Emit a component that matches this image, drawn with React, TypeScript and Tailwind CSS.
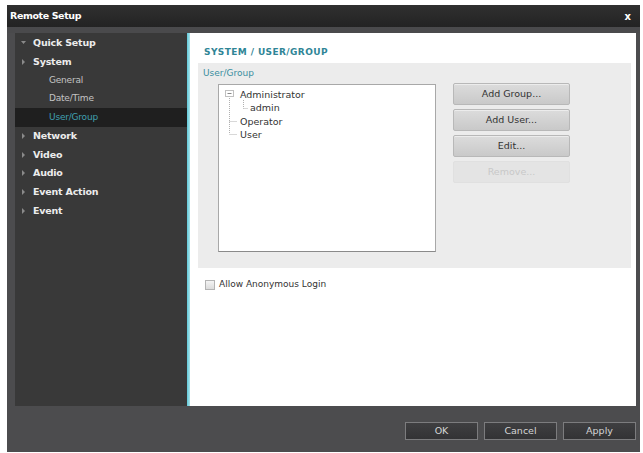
import { ReactNode } from 'react';

const font = { fontFamily: '"DejaVu Sans", Verdana, sans-serif' };

type NavItem = {
  label: string;
  level: 0 | 1;
  open?: boolean;
  active?: boolean;
};

const navItems: NavItem[] = [
  { label: 'Quick Setup', level: 0, open: true },
  { label: 'System', level: 0 },
  { label: 'General', level: 1 },
  { label: 'Date/Time', level: 1 },
  { label: 'User/Group', level: 1, active: true },
  { label: 'Network', level: 0 },
  { label: 'Video', level: 0 },
  { label: 'Audio', level: 0 },
  { label: 'Event Action', level: 0 },
  { label: 'Event', level: 0 },
];

function Arrow({ open }: { open?: boolean }) {
  return (
    <svg width="5" height="6" viewBox="0 0 5 6" className="shrink-0">
      {open ? <path d="M0 1 L5 1 L2.5 4 Z" fill="#8a8a8a" /> : <path d="M1 0 L4 3 L1 6 Z" fill="#8a8a8a" />}
    </svg>
  );
}

function Sidebar() {
  return (
    <div className="w-[172px] h-full bg-[#393939] pt-[1px]">
      {navItems.map((item) =>
        item.level === 0 ? (
          <div key={item.label} className="h-[18.6px] flex items-center pl-[6px] gap-[7px]">
            <Arrow open={item.open} />
            <span className="text-[9.5px] font-bold text-[#ececec] tracking-[-0.2px]">{item.label}</span>
          </div>
        ) : (
          <div
            key={item.label}
            className={`h-[18.6px] flex items-center pl-[34px] ${item.active ? 'bg-[#1f1f1f]' : ''}`}
          >
            <span className={`text-[9px] tracking-[-0.2px] ${item.active ? 'text-[#3f9fb0]' : 'text-[#c4c4c4]'}`}>
              {item.label}
            </span>
          </div>
        ),
      )}
    </div>
  );
}

function GrayButton({ children, disabled }: { children: ReactNode; disabled?: boolean }) {
  return (
    <button
      className={`w-[117px] h-[22px] rounded-[2px] border text-[9.5px] flex items-center justify-center ${
        disabled
          ? 'border-[#e0e0e0] bg-[#e4e4e4] text-[#c8c8c8]'
          : 'border-[#b8b8b8] bg-gradient-to-b from-[#dcdcdc] to-[#c9c9c9] text-[#333] shadow-[inset_0_1px_0_#ececec]'
      }`}
    >
      {children}
    </button>
  );
}

function TreeView() {
  return (
    <div className="relative w-[218px] h-[168px] bg-white border border-[#a8a8a8] border-b-[#8a8a8a] text-[9.5px] text-[#333]">
      {/* connector lines */}
      <svg className="absolute left-0 top-0" width="60" height="60">
        <g stroke="#b0b0b0" strokeWidth="1" strokeDasharray="1 1" fill="none">
          <line x1="10.5" y1="13" x2="10.5" y2="49" />
          <line x1="10.5" y1="36.5" x2="18" y2="36.5" />
          <line x1="10.5" y1="49.5" x2="18" y2="49.5" />
          <line x1="24.5" y1="15" x2="24.5" y2="23.5" />
          <line x1="24.5" y1="23.5" x2="29" y2="23.5" />
        </g>
        <rect x="6.5" y="5.5" width="8" height="6" fill="#fff" stroke="#c0c0c0" />
        <line x1="8.5" y1="8.5" x2="12.5" y2="8.5" stroke="#888" />
      </svg>
      <div className="absolute left-[21px] top-[3px] leading-[13.3px]">
        <div>Administrator</div>
        <div className="pl-[10px]">admin</div>
        <div>Operator</div>
        <div>User</div>
      </div>
    </div>
  );
}

function DarkButton({ children }: { children: ReactNode }) {
  return (
    <button className="w-[73px] h-[18px] border border-[#7c7c7e] bg-gradient-to-b from-[#3f3f41] to-[#333335] text-[9.5px] text-[#d6d6d6] flex items-center justify-center">
      {children}
    </button>
  );
}

export default function App() {
  return (
    <div className="w-[643px] h-[453px] bg-white pt-[5px] pl-[7px]" style={font}>
      <div className="w-[633px] h-[447px] flex flex-col bg-[#4c4c4e]">
        <div className="h-[22px] flex items-center justify-between pl-[3px] pr-[9px] bg-gradient-to-b from-[#303030] to-[#232323]">
          <span className="text-[9.5px] font-bold text-white tracking-[-0.4px]">Remote Setup</span>
          <span className="text-[10px] font-bold text-white">x</span>
        </div>

        <div className="h-[6px] bg-[#4a4a4c]" />

        <div className="flex h-[373px] pl-[8px] pr-[4px]">
          <Sidebar />
          <div className="w-[3px] h-full bg-gradient-to-r from-[#5ec8d8] to-[#a8e4ec]" />
          <div className="flex-1 h-full bg-white">
            <div className="h-[30px] pl-[14px] pt-[5px]">
              <span className="text-[9px] font-bold text-[#2f8596] tracking-[0.4px]">SYSTEM / USER/GROUP</span>
            </div>
            <div className="ml-[8px] mr-[5px] h-[205px] bg-[#ececec] pl-[5px] pt-[4px]">
              <div className="text-[9px] text-[#3a8fa0] leading-[12px]">User/Group</div>
              <div className="flex mt-[5px] pl-[15px]">
                <TreeView />
                <div className="ml-[17px] -mt-[1px] flex flex-col gap-[4px]">
                  <GrayButton>Add Group...</GrayButton>
                  <GrayButton>Add User...</GrayButton>
                  <GrayButton>Edit...</GrayButton>
                  <GrayButton disabled>Remove...</GrayButton>
                </div>
              </div>
            </div>
            <label className="flex items-center gap-[4px] ml-[15px] mt-[10px]">
              <span className="w-[10px] h-[10px] border border-[#b4b4b4] bg-gradient-to-b from-[#f4f4f4] to-[#dcdcdc]" />
              <span className="text-[9px] text-[#333]">Allow Anonymous Login</span>
            </label>
          </div>
        </div>

        <div className="flex-1 flex justify-end items-start gap-[6px] pt-[16px] pr-[4px]">
          <DarkButton>OK</DarkButton>
          <DarkButton>Cancel</DarkButton>
          <DarkButton>Apply</DarkButton>
        </div>
      </div>
    </div>
  );
}
